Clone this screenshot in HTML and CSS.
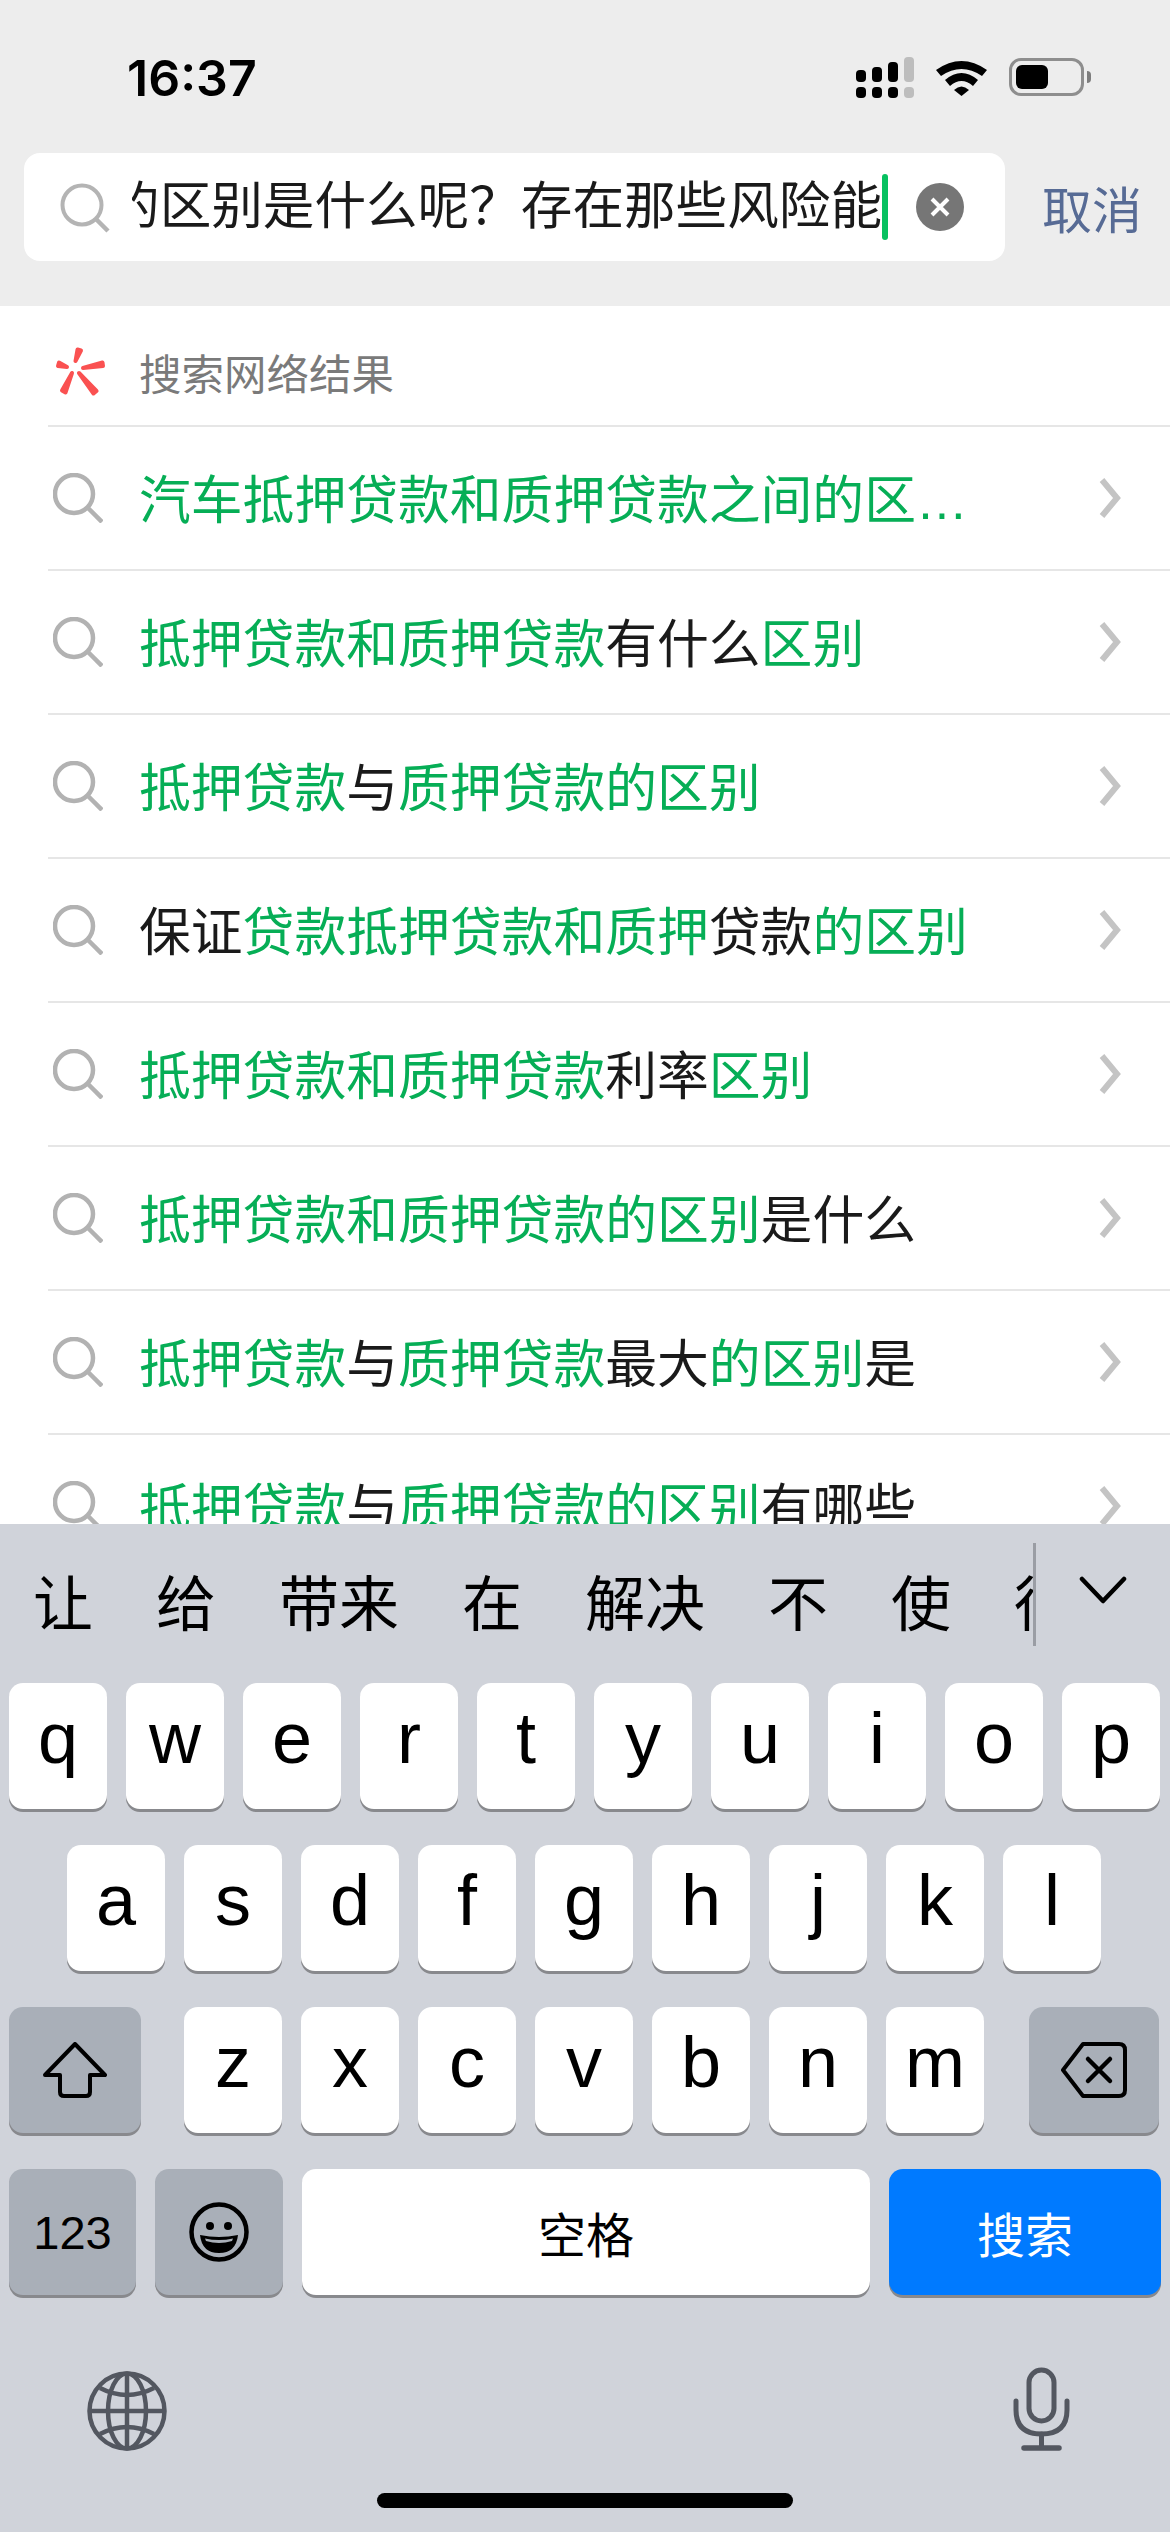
FILE: index.html
```html
<!DOCTYPE html>
<html>
<head>
	<meta charset="utf-8">
	<title>搜索</title>
	<link rel="stylesheet" href="styles.css">
</head>
<body>
	<div class="top">
		<div class="status">
			<span class="time">16:37</span>
			<div class="status-icons">
				<svg class="signal" width="58" height="41" viewBox="0 0 58 41">
					<rect x="0" y="13" width="10" height="12" rx="4"/>
					<rect x="16" y="10" width="10" height="15" rx="4"/>
					<rect x="32" y="5" width="10" height="20" rx="4"/>
					<rect x="48" y="0" width="10" height="25" rx="4" fill="#bdbdbd"/>
					<rect x="0" y="30" width="10" height="11" rx="4"/>
					<rect x="16" y="30" width="10" height="11" rx="4"/>
					<rect x="32" y="30" width="10" height="11" rx="4"/>
					<rect x="48" y="30" width="10" height="11" rx="4" fill="#bdbdbd"/>
				</svg>
				<svg class="wifi" width="51" height="37" viewBox="0 0 51 37">
					<path d="M0 11 Q25.500 -7 51 11 L46 17 Q25.500 3 5 17Z"/>
					<path d="M9 21 Q25.500 7 42 21 L37 27 Q25.500 17 14 27Z"/>
					<path d="M18 31 Q25.500 24 33 31 L25.500 37Z"/>
				</svg>
				<div class="battery"><div class="battery-fill"></div></div>
				<div class="battery-nub"></div>
			</div>
		</div>
		<div class="search-row">
			<div class="search-box">
				<svg class="box-lens" width="50" height="50" viewBox="0 0 50 50">
					<circle cx="22" cy="22" r="19.500" fill="none" stroke="#b4b4b4" stroke-width="4"/>
					<path d="M36 36 L48 48" stroke="#b4b4b4" stroke-width="4.500" fill="none"/>
				</svg>
				<div class="query"><span class="query-text">的区别是什么呢？存在那些风险能</span></div>
				<div class="caret"></div>
				<div class="clear">
					<svg width="24" height="24" viewBox="0 0 24 24">
						<path d="M4 4 L20 20 M20 4 L4 20" stroke="#fff" stroke-width="4"/>
					</svg>
				</div>
			</div>
			<span class="cancel">取消</span>
		</div>
	</div>

	<div class="results">
		<div class="results-head">
			<svg class="logo" width="52" height="50" viewBox="0 0 52 50">
				<g fill="#fa5151" stroke="#fa5151" stroke-width="4" stroke-linejoin="round">
					<path d="M20.500 15 L22.500 3.500 L26 4.500Z"/>
					<path d="M12 21 L4 16.500 L3 20Z"/>
					<path d="M28 22 L47.500 16.500 L48 20Z"/>
					<path d="M17 27 L7 44.500 L10.500 46.500Z"/>
					<path d="M24 27 L38.500 47.500 L41.500 45Z"/>
				</g>
			</svg>
			<span>搜索网络结果</span>
		</div>
		<div class="row">
			<svg class="lens" width="50" height="50" viewBox="0 0 50 50"><circle cx="21" cy="21" r="19"/><path d="M35 35 L49 49"/></svg>
			<span class="row-text"><em>汽车抵押贷款和质押贷款之间的区</em><em>…</em></span>
			<svg class="arrow" width="24" height="40" viewBox="0 0 24 40"><path d="M4 2 L19 20 L4 38"/></svg>
		</div>
		<div class="row">
			<svg class="lens" width="50" height="50" viewBox="0 0 50 50"><circle cx="21" cy="21" r="19"/><path d="M35 35 L49 49"/></svg>
			<span class="row-text"><em>抵押贷款和质押贷款</em>有什么<em>区别</em></span>
			<svg class="arrow" width="24" height="40" viewBox="0 0 24 40"><path d="M4 2 L19 20 L4 38"/></svg>
		</div>
		<div class="row">
			<svg class="lens" width="50" height="50" viewBox="0 0 50 50"><circle cx="21" cy="21" r="19"/><path d="M35 35 L49 49"/></svg>
			<span class="row-text"><em>抵押贷款</em>与<em>质押贷款的区别</em></span>
			<svg class="arrow" width="24" height="40" viewBox="0 0 24 40"><path d="M4 2 L19 20 L4 38"/></svg>
		</div>
		<div class="row">
			<svg class="lens" width="50" height="50" viewBox="0 0 50 50"><circle cx="21" cy="21" r="19"/><path d="M35 35 L49 49"/></svg>
			<span class="row-text">保证<em>贷款抵押贷款和质押</em>贷款<em>的区别</em></span>
			<svg class="arrow" width="24" height="40" viewBox="0 0 24 40"><path d="M4 2 L19 20 L4 38"/></svg>
		</div>
		<div class="row">
			<svg class="lens" width="50" height="50" viewBox="0 0 50 50"><circle cx="21" cy="21" r="19"/><path d="M35 35 L49 49"/></svg>
			<span class="row-text"><em>抵押贷款和质押贷款</em>利率<em>区别</em></span>
			<svg class="arrow" width="24" height="40" viewBox="0 0 24 40"><path d="M4 2 L19 20 L4 38"/></svg>
		</div>
		<div class="row">
			<svg class="lens" width="50" height="50" viewBox="0 0 50 50"><circle cx="21" cy="21" r="19"/><path d="M35 35 L49 49"/></svg>
			<span class="row-text"><em>抵押贷款和质押贷款的区别</em>是什么</span>
			<svg class="arrow" width="24" height="40" viewBox="0 0 24 40"><path d="M4 2 L19 20 L4 38"/></svg>
		</div>
		<div class="row">
			<svg class="lens" width="50" height="50" viewBox="0 0 50 50"><circle cx="21" cy="21" r="19"/><path d="M35 35 L49 49"/></svg>
			<span class="row-text"><em>抵押贷款</em>与<em>质押贷款</em>最大<em>的区别</em>是</span>
			<svg class="arrow" width="24" height="40" viewBox="0 0 24 40"><path d="M4 2 L19 20 L4 38"/></svg>
		</div>
		<div class="row">
			<svg class="lens" width="50" height="50" viewBox="0 0 50 50"><circle cx="21" cy="21" r="19"/><path d="M35 35 L49 49"/></svg>
			<span class="row-text"><em>抵押贷款</em>与<em>质押贷款的区别</em>有哪些</span>
			<svg class="arrow" width="24" height="40" viewBox="0 0 24 40"><path d="M4 2 L19 20 L4 38"/></svg>
		</div>
	</div>

	<div class="keyboard">
		<div class="candidates">
			<div class="cand-list">
				<span>让</span><span>给</span><span>带来</span><span>在</span><span>解决</span><span>不</span><span>使</span><span>得</span>
			</div>
			<div class="cand-more">
				<svg width="48" height="28" viewBox="0 0 48 28"><path d="M3 3 L24 25 L45 3" fill="none" stroke="#000" stroke-width="4.500" stroke-linecap="round" stroke-linejoin="round"/></svg>
			</div>
		</div>
		<div class="key-row">
			<div class="key">q</div><div class="key">w</div><div class="key">e</div><div class="key">r</div><div class="key">t</div><div class="key">y</div><div class="key">u</div><div class="key">i</div><div class="key">o</div><div class="key">p</div>
		</div>
		<div class="key-row key-row-mid">
			<div class="key">a</div><div class="key">s</div><div class="key">d</div><div class="key">f</div><div class="key">g</div><div class="key">h</div><div class="key">j</div><div class="key">k</div><div class="key">l</div>
		</div>
		<div class="key-row">
			<div class="key key-dark key-shift">
				<svg width="64" height="56" viewBox="0 0 64 56"><path d="M32 2 L62 33 L47 33 L47 50 Q47 54 43 54 L21 54 Q17 54 17 50 L17 33 L2 33Z" fill="none" stroke="#000" stroke-width="4" stroke-linejoin="round"/></svg>
			</div>
			<div class="key key-z">z</div><div class="key">x</div><div class="key">c</div><div class="key">v</div><div class="key">b</div><div class="key">n</div><div class="key">m</div>
			<div class="key key-dark key-back">
				<svg width="66" height="56" viewBox="0 0 66 56">
					<path d="M22 2 L58 2 Q64 2 64 8 L64 48 Q64 54 58 54 L22 54 L2 28Z" fill="none" stroke="#000" stroke-width="4" stroke-linejoin="round"/>
					<path d="M27 17 L49 39 M49 17 L27 39" stroke="#000" stroke-width="4.500" stroke-linecap="round"/>
				</svg>
			</div>
		</div>
		<div class="key-row">
			<div class="key key-dark key-num">123</div>
			<div class="key key-dark key-emoji">
				<svg width="60" height="60" viewBox="0 0 60 60">
					<circle cx="30" cy="30" r="27.500" fill="none" stroke="#000" stroke-width="4.500"/>
					<circle cx="21" cy="24" r="4"/>
					<circle cx="39" cy="24" r="4"/>
					<path d="M11 33 Q30 37 49 33 Q47 51 30 51 Q13 51 11 33Z"/>
					<path d="M16 36.500 Q30 39.500 44 36.500 L43 39 Q30 43 17 39Z" fill="#a9afb8"/>
				</svg>
			</div>
			<div class="key key-space">空格</div>
			<div class="key key-go">搜索</div>
		</div>
		<div class="kb-bottom">
			<svg class="globe" width="80" height="80" viewBox="0 0 80 80" fill="none" stroke="#535760" stroke-width="4.500">
				<circle cx="40" cy="40" r="37.500"/>
				<ellipse cx="40" cy="40" rx="19" ry="37.500"/>
				<path d="M40 2 L40 78 M2 40 L78 40"/>
				<path d="M13 17 Q40 31 67 17 M13 63 Q40 49 67 63"/>
			</svg>
			<svg width="58" height="84" viewBox="0 0 58 84" fill="none" stroke="#535760" stroke-width="5" stroke-linecap="round">
				<rect x="17" y="3" width="25" height="51" rx="12.500"/>
				<path d="M4 34 L4 43 Q4 67 29.500 67 Q55 67 55 43 L55 34"/>
				<path d="M29.500 67 L29.500 80"/>
				<path d="M12 81 L47 81" stroke-width="5.500"/>
			</svg>
		</div>
		<div class="home-bar"></div>
	</div>
</body>
</html>
```
FILE: styles.css
```css
*{
	box-sizing: border-box;
}
html,body{
	margin: 0;
	padding: 0;
}
body{
	width: 1170px;
	height: 2532px;
	overflow: hidden;
	background-color: #fff;
	display: flex;
	flex-direction: column;
	font-family: "Liberation Sans", "Noto Sans CJK SC", sans-serif;
}
em{
	font-style: normal;
	color: #06ae56;
}

/* top grey part */
.top{
	height: 306px;
	flex: none;
	background-color: #ededed;
}
.status{
	height: 153px;
	display: flex;
	justify-content: space-between;
	padding: 57px 79px 0 127px;
}
.time{
	font-family: Inter, "Liberation Sans", sans-serif;
	font-size: 50px;
	line-height: 42px;
	font-weight: 600;
	color: #000;
}
.status-icons{
	display: flex;
	align-items: flex-start;
}
.wifi{
	margin: 2px 22px 0 22px;
}
.battery{
	width: 75px;
	height: 38px;
	margin-top: 1px;
	padding: 4px;
	border: 3px solid #8e8e8e;
	border-radius: 12px;
}
.battery-fill{
	width: 32px;
	height: 100%;
	background-color: #000;
	border-radius: 6px;
}
.battery-nub{
	width: 4px;
	height: 12px;
	margin: 14px 0 0 3px;
	background-color: #7d7d7d;
	border-radius: 0 6px 6px 0;
}
.search-row{
	display: flex;
	align-items: center;
	padding-left: 24px;
}
.search-box{
	width: 981px;
	height: 108px;
	padding-left: 36px;
	display: flex;
	align-items: center;
	background-color: #fff;
	border-radius: 16px;
}
.box-lens{
	flex: none;
	margin-top: 2px;
}
.query{
	flex: none;
	width: 750px;
	margin-left: 22px;
	height: 70px;
	line-height: 68px;
	overflow: hidden;
	position: relative;
	font-size: 51.600px;
	color: #1a1a1a;
}
.query-text{
	position: absolute;
	right: 0;
	top: 0;
	white-space: nowrap;
}
.caret{
	flex: none;
	width: 6px;
	height: 66px;
	background-color: #07c160;
	border-radius: 3px;
}
.clear{
	flex: none;
	width: 48px;
	height: 48px;
	margin-left: 28px;
	border-radius: 50%;
	background-color: #767676;
	display: flex;
	align-items: center;
	justify-content: center;
}
.cancel{
	margin-left: 37px;
	font-size: 50px;
	color: #576b95;
}

/* results */
.results{
	flex: 1;
	overflow: hidden;
}
.results-head{
	height: 119px;
	padding: 11px 0 0 55px;
	display: flex;
	align-items: center;
	font-size: 42.500px;
	color: #7a7a7a;
}
.logo{
	margin-right: 32px;
}
.row{
	height: 144px;
	margin-left: 48px;
	padding: 0 48px 0 5px;
	display: flex;
	align-items: center;
	border-top: 2px solid #e6e6e6;
	font-size: 51.800px;
	color: #1a1a1a;
}
.row-text{
	flex: 1;
	margin: 0 0 4px 36px;
	white-space: nowrap;
}
.lens{
	flex: none;
}
.lens circle,.lens path{
	fill: none;
	stroke: #b2b2b2;
	stroke-width: 4.500px;
}
.arrow{
	flex: none;
}
.arrow path{
	fill: none;
	stroke: #c4c4c4;
	stroke-width: 6px;
}

/* keyboard */
.keyboard{
	height: 1008px;
	flex: none;
	padding: 0 9px;
	position: relative;
	background-color: #d0d3da;
}
.candidates{
	height: 159px;
	margin: 0 -9px;
	display: flex;
}
.cand-list{
	width: 1033px;
	padding: 44px 0 0 33px;
	display: flex;
	gap: 63px;
	overflow: hidden;
	font-size: 60px;
	line-height: 76px;
	color: #000;
	white-space: nowrap;
}
.cand-more{
	height: 103px;
	margin-top: 19px;
	padding: 33px 0 0 43px;
	border-left: 3px solid #9a9da4;
}
.key-row{
	height: 129px;
	margin-bottom: 33px;
	display: flex;
	gap: 19px;
}
.key-row-mid{
	padding: 0 58px;
}
.key{
	width: 98px;
	height: 126px;
	display: flex;
	align-items: center;
	justify-content: center;
	padding-bottom: 16px;
	background-color: #fff;
	border-radius: 14px;
	box-shadow: 0 3px 0 #88898d;
	font-size: 72px;
	color: #000;
}
.key-dark{
	background-color: #a9afb8;
	padding-bottom: 0;
}
.key-shift{
	width: 132px;
	margin-right: 24px;
}
.key-back{
	width: 130px;
	margin-left: 26px;
}
.key-num{
	width: 127px;
	font-size: 47px;
}
.key-emoji{
	width: 128px;
}
.key-space{
	width: 568px;
	padding-bottom: 0;
	font-size: 48px;
}
.key-go{
	width: 272px;
	padding-bottom: 0;
	background-color: #007aff;
	color: #fff;
	font-size: 48px;
}
.kb-bottom{
	display: flex;
	justify-content: space-between;
	align-items: center;
	padding: 36px 91px 0 78px;
}
.globe{
	margin-top: 4px;
}
.home-bar{
	position: absolute;
	left: 377px;
	bottom: 24px;
	width: 416px;
	height: 15px;
	background-color: #000;
	border-radius: 8px;
}
```
